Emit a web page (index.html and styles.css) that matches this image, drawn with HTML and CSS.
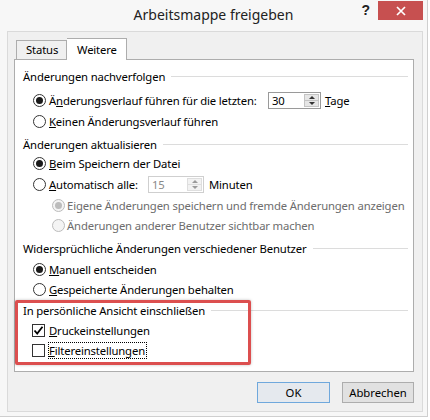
FILE: index.html
```html
<!DOCTYPE html>
<html lang="de">
<head>
<meta charset="utf-8">
<title>Arbeitsmappe freigeben</title>
<link rel="stylesheet" href="styles.css">
</head>
<body>
<div class="window">
  <div class="titlebar">
    <span></span>
    <div class="title">Arbeitsmappe freigeben</div>
    <div class="controls">
      <span class="help">?</span>
      <span class="close"><svg width="10" height="10" viewBox="0 0 10 10"><path d="M1 1L9 9M9 1L1 9" stroke="#fff" stroke-width="1.7" fill="none"/></svg></span>
    </div>
  </div>
  <div class="client">
    <div class="tabs">
      <div class="tab">Status</div>
      <div class="tab active">Weitere</div>
    </div>
    <div class="panel">
      <section class="group g1">
        <div class="legend"><span>Änderungen nachverfolgen</span><i class="rule"></i></div>
        <div class="row tall first">
          <span class="radio on"></span>
          <span class="label w1">Ä<u>n</u>derungsverlauf führen für die letzten:</span>
          <span class="spin"><span class="val">30</span><span class="arrows"><i class="up"></i><i class="down"></i></span></span>
          <span class="after"><u>T</u>age</span>
        </div>
        <div class="row"><span class="radio"></span><span class="label"><u>K</u>einen Änderungsverlauf führen</span></div>
      </section>
      <section class="group g2">
        <div class="legend"><span>Änderungen aktualisieren</span><i class="rule"></i></div>
        <div class="row"><span class="radio on"></span><span class="label"><u>B</u>eim Speichern der Datei</span></div>
        <div class="row tall">
          <span class="radio"></span>
          <span class="label w2"><u>A</u>utomatisch alle:</span>
          <span class="spin off small"><span class="val">15</span><span class="arrows"><i class="up"></i><i class="down"></i></span></span>
          <span class="after">Minuten</span>
        </div>
        <div class="row sub disabled"><span class="radio on"></span><span class="label">Eigene Änderungen speichern und fremde Änderungen anzeigen</span></div>
        <div class="row sub disabled"><span class="radio"></span><span class="label">Änderungen anderer Benutzer sichtbar machen</span></div>
      </section>
      <section class="group g3">
        <div class="legend"><span>Widersprüchliche Änderungen verschiedener Benutzer</span><i class="rule"></i></div>
        <div class="row"><span class="radio on"></span><span class="label"><u>M</u>anuell entscheiden</span></div>
        <div class="row"><span class="radio"></span><span class="label"><u>G</u>espeicherte Änderungen behalten</span></div>
      </section>
      <section class="group g4">
        <div class="legend"><span>In persönliche Ansicht einschließen</span><i class="rule"></i></div>
        <div class="row chk"><span class="check on"><svg width="11" height="11" viewBox="0 0 11 11"><path d="M1.5 5.5L4.2 8.5L9.5 1.8" stroke="#000" stroke-width="1.8" fill="none"/></svg></span><span class="label"><u>D</u>ruckeinstellungen</span></div>
        <div class="row chk"><span class="check"></span><span class="label focus"><u>F</u>iltereinstellungen</span></div>
        <div class="highlight"></div>
      </section>
    </div>
    <div class="buttons">
      <button class="btn default">OK</button>
      <button class="btn">Abbrechen</button>
    </div>
  </div>
</div>
</body>
</html>
```

FILE: styles.css
```css
* { box-sizing: border-box; }
html, body { margin: 0; padding: 0; background: #ffffff; }
body {
  font-family: "Segoe UI", "Noto Sans", "Open Sans", sans-serif;
  font-size: 11.3px;
  letter-spacing: -0.15px;
  color: #000;
}
.window {
  width: 428px;
  height: 417px;
  background: #f7f7f7;
  border-right: 1px solid #cfcfcf;
  border-bottom: 1px solid #cfcfcf;
  display: flex;
  flex-direction: column;
}
.titlebar {
  height: 31px;
  display: grid;
  grid-template-columns: 1fr auto 1fr;
  align-items: start;
}
.title {
  font-size: 14px;
  letter-spacing: 0;
  color: #222;
  padding-top: 5px;
}
.controls {
  display: flex;
  justify-content: flex-end;
  align-items: flex-start;
  padding-right: 4px;
}
.help {
  font-weight: bold;
  font-size: 14px;
  color: #222;
  margin-top: 2px;
  margin-right: 8px;
  font-family: "Liberation Sans", sans-serif;
}
.close {
  width: 45px;
  height: 19px;
  margin-top: 1px;
  background: #c75050;
  display: flex;
  align-items: center;
  justify-content: center;
}
.client {
  margin: 0 4px 4px 7px;
  flex: 1;
  background: #f0f0f0;
  border: 1px solid #dadada;
  padding: 6px 8px 8px 6px;
  display: flex;
  flex-direction: column;
}
.tabs {
  display: flex;
  align-items: flex-end;
  height: 21px;
  padding-left: 2px;
}
.tab {
  height: 19px;
  padding: 0 0 0 9px;
  border: 1px solid #adadad;
  border-bottom: none;
  background: #f0f0f0;
  line-height: 18px;
  width: 51px;
}
.tab.active {
  height: 22px;
  width: 60px;
  background: #fff;
  margin-bottom: -1px;
  border-left: none;
  position: relative;
  z-index: 1;
  line-height: 22px;
  padding-left: 10px;
}
.panel {
  height: 313px;
  background: #fff;
  border: 1px solid #adadad;
  padding: 7px 5px 0 8px;
}
.group { position: relative; }
.g2 { margin-top: 4px; }
.g3 { margin-top: 4px; }
.g4 { margin-top: 2px; }
.legend {
  height: 18px;
  display: flex;
  align-items: center;
  white-space: nowrap;
}
.rule {
  flex: 1;
  height: 1px;
  background: #dcdcdc;
  margin-left: 6px;
  margin-top: 1px;
}
.row {
  height: 20px;
  display: flex;
  align-items: center;
  padding-left: 10px;
  white-space: nowrap;
}
.row.tall { height: 22px; }
.row.first { margin-top: 4px; }
.g3 .legend { margin-bottom: 2px; }
.g4 .legend { margin-bottom: 1px; }
.row.sub { padding-left: 29px; }
.radio {
  width: 13px;
  height: 13px;
  border: 1px solid #333;
  border-radius: 50%;
  background: #fff;
  margin-right: 3px;
  display: flex;
  align-items: center;
  justify-content: center;
  flex: none;
}
.radio.on::after {
  content: "";
  width: 7px;
  height: 7px;
  border-radius: 50%;
  background: #1a1a1a;
}
.disabled .radio { border-color: #bcbcbc; background: #f4f4f4; }
.disabled .radio.on::after { background: #bcbcbc; }
.disabled .label { color: #6d6d6d; }
.row.sub .radio { margin-right: 2px; }
.label.w1 { width: 219px; }
.label.w2 { width: 99px; }
.spin {
  width: 53px;
  height: 17px;
  border: 1px solid #9a9a9a;
  background: #fff;
  display: flex;
  justify-content: space-between;
  flex: none;
}
.spin.small { width: 56px; }
.spin .val { padding-left: 3px; line-height: 15px; }
.spin.off { border-color: #cfcfcf; }
.spin.off .val { color: #8a8a8a; }
.arrows {
  width: 15px;
  display: flex;
  flex-direction: column;
  margin: 1px 1px 1px 0;
}
.arrows i {
  flex: 1;
  background: #e6e6e6;
  border: 1px solid #c4c4c4;
  position: relative;
  display: flex;
  align-items: center;
  justify-content: center;
}
.arrows i + i { border-top: none; }
.arrows .up::after {
  content: "";
  border-left: 3px solid transparent;
  border-right: 3px solid transparent;
  border-bottom: 3px solid #333;
}
.arrows .down::after {
  content: "";
  border-left: 3px solid transparent;
  border-right: 3px solid transparent;
  border-top: 3px solid #333;
}
.spin.off .arrows i { background: #f2f2f2; border-color: #dedede; }
.spin.off .arrows .up::after { border-bottom-color: #9a9a9a; }
.spin.off .arrows .down::after { border-top-color: #9a9a9a; }
.after { margin-left: 4px; }
.spin.small + .after { margin-left: 5px; }
.row.chk { padding-left: 9px; }
.check {
  width: 13px;
  height: 13px;
  border: 1px solid #333;
  background: #fff;
  margin-right: 4px;
  display: flex;
  align-items: center;
  justify-content: center;
  flex: none;
}
.label.focus { outline: 1px dotted #000; outline-offset: 0; padding: 0 1px 0 0; }
.highlight {
  position: absolute;
  left: -8px;
  top: -1px;
  width: 236px;
  height: 65px;
  border: 3px solid #dc4f4f;
  border-radius: 2px;
  box-shadow: 0 0 3px rgba(0,0,0,0.25);
  pointer-events: none;
}
.buttons {
  display: flex;
  justify-content: flex-end;
  gap: 12px;
  margin-top: 10px;
}
.btn {
  font-family: inherit;
  font-size: 11.3px;
  letter-spacing: 0;
  height: 21px;
  width: 72px;
  background: #e1e1e1;
  border: 1px solid #adadad;
  padding: 0;
  color: #000;
}
.btn.default {
  width: 73px;
  border-color: #6fa8dc;
  background: #e5e9ee;
}
```
